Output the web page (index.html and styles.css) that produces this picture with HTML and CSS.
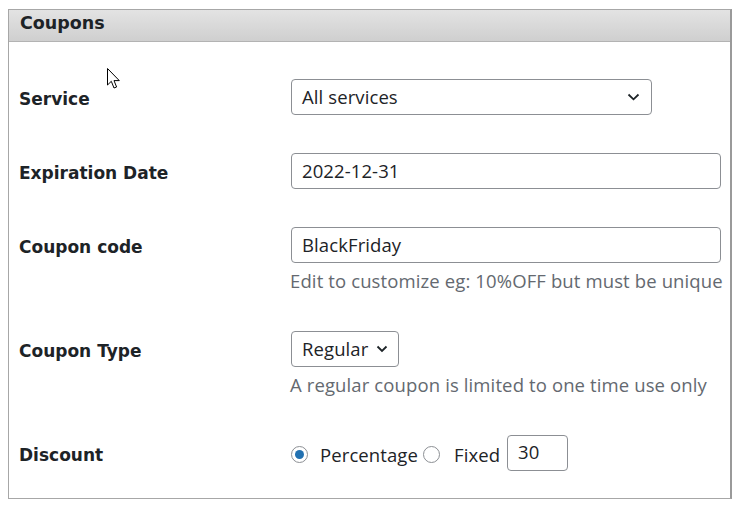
FILE: index.html
```html
<!DOCTYPE html>
<html>
<head>
<meta charset="utf-8">
<link rel="stylesheet" href="styles.css">
</head>
<body>
<div class="panel">
  <div class="panel-head">Coupons</div>
  <div class="panel-body">
    <div class="label">Service</div>
    <div class="field">
      <div class="select select-wide"><span>All services</span>
        <svg class="chev" width="13" height="8" viewBox="0 0 13 8"><path d="M1.5 1.5 L6.5 6.3 L11.5 1.5" fill="none" stroke="#1d2327" stroke-width="1.8"/></svg>
      </div>
    </div>

    <div class="label">Expiration Date</div>
    <div class="field">
      <div class="input input-full">2022-12-31</div>
    </div>

    <div class="label">Coupon code</div>
    <div class="field">
      <div class="input input-full">BlackFriday</div>
      <p class="hint">Edit to customize eg: 10%OFF but must be unique</p>
    </div>

    <div class="label">Coupon Type</div>
    <div class="field">
      <div class="select select-small"><span>Regular</span>
        <svg class="chev" width="12" height="8" viewBox="0 0 12 8"><path d="M1.5 1.5 L6 6 L10.5 1.5" fill="none" stroke="#1d2327" stroke-width="1.8"/></svg>
      </div>
      <p class="hint">A regular coupon is limited to one time use only</p>
    </div>

    <div class="label">Discount</div>
    <div class="field radios">
      <span class="radio checked"></span><span class="rlabel">Percentage</span>
      <span class="radio"></span><span class="rlabel rlabel-fixed">Fixed</span>
      <div class="input input-num">30</div>
    </div>
  </div>
  <svg class="cursor" width="14" height="22" viewBox="0 0 14 22"><path d="M0.5 0.5 L0.5 17 L4.3 13.3 L7 20 L9.6 19 L7 12.6 L12.3 12.6 Z" fill="#fff" stroke="#000" stroke-width="1" stroke-linejoin="round"/></svg>
</div>
</body>
</html>
```
FILE: styles.css
```css
html, body {
  margin: 0;
  padding: 0;
  background: #fff;
}
body {
  padding: 9px 0 0 8px;
}
.panel {
  position: relative;
  width: 721px;
  border: 1px solid #a7a7a7;
  border-right: 2px solid #9a9a9a;
  background: #fff;
}
.panel-head {
  height: 31px;
  border-bottom: 1px solid #b3b3b3;
  background: linear-gradient(#e3e3e3, #cfcfcf);
  font-family: "DejaVu Sans", sans-serif;
  font-weight: bold;
  font-size: 17.5px;
  color: #1d2327;
  line-height: 26px;
  padding-left: 11px;
}
.panel-body {
  display: grid;
  grid-template-columns: 272px 1fr;
  row-gap: 38px;
  padding: 37px 9px 27px 10px;
}
.label {
  height: 36px;
  display: flex;
  align-items: center;
  padding-top: 3px;
  box-sizing: border-box;
  font-family: "DejaVu Sans", sans-serif;
  font-weight: bold;
  font-size: 17px;
  color: #1d2327;
}
.field {
  font-family: "Open Sans", sans-serif;
  font-size: 18.5px;
  letter-spacing: 0.1px;
  color: #1d2327;
}
.select, .input {
  box-sizing: border-box;
  height: 36px;
  border: 1px solid #8c8f94;
  border-radius: 4px;
  background: #fff;
  display: flex;
  align-items: center;
  padding-left: 10px;
  padding-bottom: 1px;
}
.select-wide {
  width: 361px;
  justify-content: space-between;
  padding-right: 11px;
}
.select-small {
  width: 108px;
  padding-right: 10px;
  justify-content: space-between;
}
.input-full {
  width: 430px;
}
.input-num {
  width: 61px;
  padding-left: 10px;
  padding-bottom: 4px;
}
.hint {
  margin: 6px 0 0 -1px;
  line-height: 24px;
  font-size: 18.5px;
  letter-spacing: 0.12px;
  color: #646970;
  white-space: nowrap;
}
.radios {
  display: flex;
  align-items: center;
  height: 36px;
}
.radio {
  box-sizing: border-box;
  width: 17px;
  height: 17px;
  border: 1px solid #8c8f94;
  border-radius: 50%;
  background: #fff;
  position: relative;
  margin-top: 3px;
}
.radio.checked::after {
  content: "";
  position: absolute;
  left: 3px;
  top: 3px;
  width: 9px;
  height: 9px;
  border-radius: 50%;
  background: #2271b1;
}
.rlabel {
  margin: 3px 5px 0 12px;
}
.rlabel-fixed {
  margin-left: 14px;
  margin-right: 7px;
}
.cursor {
  position: absolute;
  left: 98px;
  top: 58px;
}
```
